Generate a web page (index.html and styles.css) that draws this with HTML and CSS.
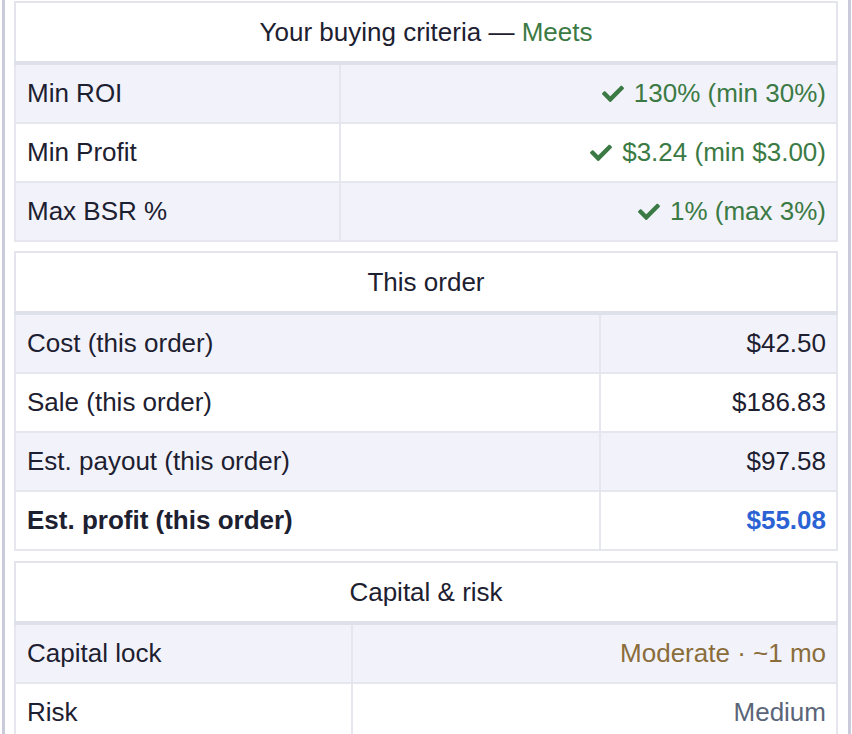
FILE: index.html
```html
<!DOCTYPE html>
<html lang="en">
<head>
<meta charset="utf-8">
<title>Buying criteria</title>
<link rel="stylesheet" href="styles.css">
</head>
<body>
<div class="panel">
  <table class="card t-criteria">
    <colgroup><col class="c1"><col></colgroup>
    <thead>
      <tr><th colspan="2">Your buying criteria — <span class="ok">Meets</span></th></tr>
    </thead>
    <tbody>
      <tr><td class="label">Min ROI</td><td class="value ok"><svg class="check" viewBox="0 0 512 420"><path d="M173.898 389.404l-166.4-166.4c-9.997-9.997-9.997-26.206 0-36.204l36.203-36.204c9.997-9.998 26.207-9.998 36.204 0L192 262.69 432.095 22.596c9.997-9.997 26.207-9.997 36.204 0l36.203 36.204c9.997 9.997 9.997 26.206 0 36.204l-294.4 294.401c-9.998 9.997-26.207 9.997-36.204-.001z"/></svg>130% (min 30%)</td></tr>
      <tr><td class="label">Min Profit</td><td class="value ok"><svg class="check" viewBox="0 0 512 420"><path d="M173.898 389.404l-166.4-166.4c-9.997-9.997-9.997-26.206 0-36.204l36.203-36.204c9.997-9.998 26.207-9.998 36.204 0L192 262.69 432.095 22.596c9.997-9.997 26.207-9.997 36.204 0l36.203 36.204c9.997 9.997 9.997 26.206 0 36.204l-294.4 294.401c-9.998 9.997-26.207 9.997-36.204-.001z"/></svg>$3.24 (min $3.00)</td></tr>
      <tr><td class="label">Max BSR %</td><td class="value ok"><svg class="check" viewBox="0 0 512 420"><path d="M173.898 389.404l-166.4-166.4c-9.997-9.997-9.997-26.206 0-36.204l36.203-36.204c9.997-9.998 26.207-9.998 36.204 0L192 262.69 432.095 22.596c9.997-9.997 26.207-9.997 36.204 0l36.203 36.204c9.997 9.997 9.997 26.206 0 36.204l-294.4 294.401c-9.998 9.997-26.207 9.997-36.204-.001z"/></svg>1% (max 3%)</td></tr>
    </tbody>
  </table>

  <table class="card t-order">
    <colgroup><col class="c1"><col></colgroup>
    <thead>
      <tr><th colspan="2">This order</th></tr>
    </thead>
    <tbody>
      <tr><td class="label">Cost (this order)</td><td class="value">$42.50</td></tr>
      <tr><td class="label">Sale (this order)</td><td class="value">$186.83</td></tr>
      <tr><td class="label">Est. payout (this order)</td><td class="value">$97.58</td></tr>
      <tr class="total"><td class="label">Est. profit (this order)</td><td class="value profit">$55.08</td></tr>
    </tbody>
  </table>

  <table class="card t-risk">
    <colgroup><col class="c1"><col></colgroup>
    <thead>
      <tr><th colspan="2">Capital &amp; risk</th></tr>
    </thead>
    <tbody>
      <tr><td class="label">Capital lock</td><td class="value warn">Moderate · ~1 mo</td></tr>
      <tr><td class="label">Risk</td><td class="value muted">Medium</td></tr>
    </tbody>
  </table>
</div>
</body>
</html>
```

FILE: styles.css
```css
html, body {
  margin: 0;
  padding: 0;
  background: #ffffff;
}

body {
  font-family: "Liberation Sans", Arial, Helvetica, sans-serif;
  font-size: 26px;
  color: #1d2030;
}

.panel {
  margin-left: 2px;
  width: 849px;
  box-sizing: border-box;
  border-left: 3px solid #cacbda;
  border-right: 3px solid #cacbda;
  padding: 1px 10px 0 9px;
  height: 734px;
  overflow: hidden;
  display: flex;
  flex-direction: column;
  gap: 9px;
}

.card {
  width: 824px;
  border-collapse: collapse;
  table-layout: fixed;
  border: 2px solid #e4e5ec;
  flex: none;
}

.t-risk {
  margin-top: 1px;
}

.card th {
  font-weight: normal;
  text-align: center;
  height: 58px;
  padding: 0 12px;
  background: #ffffff;
  border-bottom: 4px solid #dfe1ea;
}

.card td {
  height: 57px;
  padding: 0 10px 0 11px;
  border: 2px solid #e6e7ee;
  white-space: nowrap;
}

.card tbody tr:nth-child(odd) td {
  background: #f2f3fa;
}

.card tbody tr:nth-child(even) td {
  background: #ffffff;
}

.label {
  text-align: left;
}

.value {
  text-align: right;
}

.t-criteria .c1 { width: 325px; }
.t-order .c1 { width: 585px; }
.t-risk .c1 { width: 337px; }

.ok {
  color: #3b7a44;
}

.check {
  width: 22px;
  height: 18px;
  margin-right: 10px;
  vertical-align: -1px;
}

.check path {
  fill: #3b7a44;
}

.total td {
  font-weight: bold;
}

.profit {
  color: #2b63d4;
}

.warn {
  color: #8a6d3b;
}

.muted {
  color: #5b6579;
}
```
